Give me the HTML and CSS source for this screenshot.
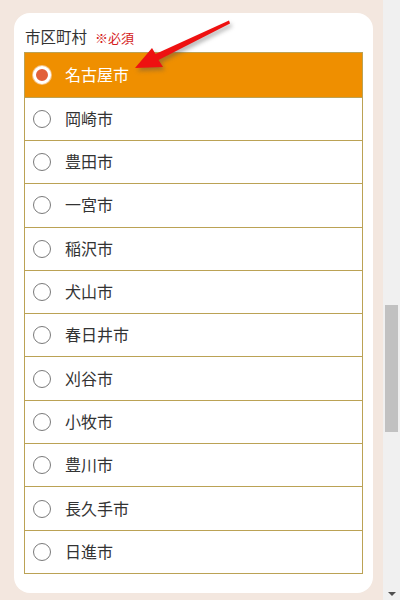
FILE: index.html
```html
<!DOCTYPE html>
<html lang="ja">
<head>
<meta charset="utf-8">
<link rel="stylesheet" href="styles.css">
</head>
<body>
<div class="page">
  <main class="main">
    <section class="card">
      <div class="label">市区町村<span class="req">※必須</span></div>
      <ul class="list">
        <li class="row selected"><span class="radio"></span><span class="name">名古屋市</span></li>
        <li class="row"><span class="radio"></span><span class="name">岡崎市</span></li>
        <li class="row"><span class="radio"></span><span class="name">豊田市</span></li>
        <li class="row"><span class="radio"></span><span class="name">一宮市</span></li>
        <li class="row"><span class="radio"></span><span class="name">稲沢市</span></li>
        <li class="row"><span class="radio"></span><span class="name">犬山市</span></li>
        <li class="row"><span class="radio"></span><span class="name">春日井市</span></li>
        <li class="row"><span class="radio"></span><span class="name">刈谷市</span></li>
        <li class="row"><span class="radio"></span><span class="name">小牧市</span></li>
        <li class="row"><span class="radio"></span><span class="name">豊川市</span></li>
        <li class="row"><span class="radio"></span><span class="name">長久手市</span></li>
        <li class="row"><span class="radio"></span><span class="name">日進市</span></li>
      </ul>
    </section>
  </main>
  <div class="scrollbar">
    <div class="track"><div class="thumb"></div></div>
    <div class="arrow-down"></div>
  </div>
  <svg class="pointer" width="400" height="600" viewBox="0 0 400 600">
    <polygon points="135,68 152,48 155.5,54 229,20.5 230,23.5 158.5,60 163,67" fill="#ee1111"/>
  </svg>
</div>
</body>
</html>
```
FILE: styles.css
```css
* { box-sizing: border-box; }
html, body { margin: 0; padding: 0; }
body {
  font-family: "Noto Sans CJK JP", "Noto Sans", sans-serif;
  color: #333;
}
.page {
  position: relative;
  display: flex;
  width: 400px;
  height: 600px;
  overflow: hidden;
}
.main {
  width: 383px;
  height: 600px;
  background: #f3e7df;
  padding: 13px 10px 0 14px;
}
.card {
  width: 359px;
  height: 580px;
  background: #fff;
  border-radius: 16px;
  padding: 13px 10px 0 10px;
}
.label {
  font-size: 15.5px;
  line-height: 20px;
  height: 20px;
  margin: 0 0 6px 1px;
  color: #333;
}
.req {
  color: #d42020;
  font-size: 13px;
  margin-left: 8px;
}
.list {
  list-style: none;
  margin: 0;
  padding: 0;
  border: 1px solid #bba255;
  border-bottom: none;
}
.row {
  display: flex;
  align-items: center;
  height: 43.3px;
  border-bottom: 1px solid #bba255;
  padding-left: 8px;
}
.row.selected {
  height: 44.7px;
  background: #ef8f00;
  color: #fff;
}
.radio {
  width: 18px;
  height: 18px;
  border-radius: 50%;
  border: 1px solid #7a7a7a;
  background: #fff;
  flex: none;
}
.selected .radio {
  border: 3.5px solid #fff;
  background: #e2603a;
  box-shadow: 0 0 0 1px #f5c48a;
}
.name {
  font-size: 16px;
  margin-left: 14px;
  line-height: 20px;
  padding-bottom: 2px;
}
.scrollbar {
  width: 17px;
  height: 600px;
  background: #f0f0f0;
  display: flex;
  flex-direction: column;
}
.track {
  flex: 1;
  padding: 305px 2px 0 2px;
}
.thumb {
  height: 127px;
  background: #c1c1c1;
}
.arrow-down {
  height: 17px;
  display: flex;
  justify-content: center;
  align-items: center;
  padding-top: 4px;
}
.arrow-down::before {
  content: "";
  width: 0;
  height: 0;
  border-left: 4px solid transparent;
  border-right: 4px solid transparent;
  border-top: 4px solid #505050;
}
.pointer {
  position: absolute;
  left: 0;
  top: 0;
  pointer-events: none;
  filter: drop-shadow(2px 3px 2px rgba(80, 80, 80, 0.45));
}
```
